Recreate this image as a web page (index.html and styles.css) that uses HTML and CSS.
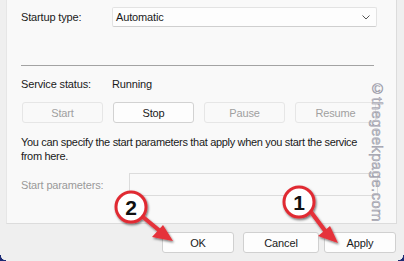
FILE: index.html
```html
<!DOCTYPE html>
<html>
<head>
<meta charset="utf-8">
<link rel="stylesheet" href="styles.css">
</head>
<body>
<div class="page">
  <div class="panel">
    <div class="row startup">
      <span class="label">Startup type:</span>
      <div class="combo">
        <span>Automatic</span>
        <svg class="chev" width="8" height="5" viewBox="0 0 8 5"><path d="M0.5 0.5 L4 4 L7.5 0.5" fill="none" stroke="#555" stroke-width="1"/></svg>
      </div>
    </div>
    <div class="sep"></div>
    <div class="row status">
      <span class="label">Service status:</span>
      <span>Running</span>
    </div>
    <div class="btnrow">
      <div class="btn disabled">Start</div>
      <div class="btn">Stop</div>
      <div class="btn disabled">Pause</div>
      <div class="btn disabled">Resume</div>
    </div>
    <p class="desc">You can specify the start parameters that apply when you start the service from here.</p>
    <div class="row params">
      <span class="label wide muted">Start parameters:</span>
      <div class="input"></div>
    </div>
  </div>
  <div class="footer">
    <div class="fbtn ok">OK</div>
    <div class="fbtn cancel">Cancel</div>
    <div class="fbtn apply">Apply</div>
  </div>
  <div class="corner-l"></div>
  <div class="corner-r"></div>
  <div class="watermark">©thegeekpage.com</div>
  <svg class="annot" width="404" height="261" viewBox="0 0 404 261">
    <defs>
      <filter id="sh" x="-30%" y="-30%" width="160%" height="160%">
        <feDropShadow dx="1" dy="1.5" stdDeviation="1.2" flood-color="#000" flood-opacity="0.55"/>
      </filter>
    </defs>
    <g filter="url(#sh)">
      <line x1="143" y1="217" x2="160" y2="231" stroke="#e5323a" stroke-width="4" stroke-linecap="round"/>
      <polygon points="173,241 152,237 163,225" fill="#e5323a"/>
      <line x1="311" y1="212" x2="326" y2="232" stroke="#e5323a" stroke-width="4" stroke-linecap="round"/>
      <polygon points="338,243 318,236 330,226" fill="#e5323a"/>
      <circle cx="131" cy="207" r="15" fill="#fff" stroke="#e02b33" stroke-width="3"/>
      <circle cx="299" cy="202" r="15" fill="#fff" stroke="#e02b33" stroke-width="3"/>
    </g>
    <text x="131" y="214.5" class="num" text-anchor="middle">2</text>
    <text x="299" y="209.5" class="num" text-anchor="middle">1</text>
  </svg>
</div>
</body>
</html>
```
FILE: styles.css
```css
* { box-sizing: border-box; }
html, body { margin: 0; padding: 0; }
body {
  background: #efefef;
  font-family: "Liberation Sans", Arial, sans-serif;
  font-size: 11px;
  letter-spacing: -0.15px;
  color: #1a1a1a;
}
.page {
  position: relative;
  width: 404px;
  height: 261px;
  overflow: hidden;
  display: flex;
  flex-direction: column;
}
.panel {
  margin-left: 6px;
  width: 391px;
  height: 224px;
  background: #f9f9f9;
  border-left: 1px solid #e6e6e6;
  border-right: 1px solid #dcdcdc;
  border-bottom: 1px solid #dcdcdc;
  padding-left: 14px;
  display: flex;
  flex-direction: column;
}
.row { display: flex; align-items: center; }
.label { width: 91px; flex: none; }
.label.wide { width: 108px; }
.muted { color: #9a9a9a; }
.startup { margin-top: 7px; height: 20px; }
.combo {
  width: 265px;
  height: 20px;
  background: #fdfdfd;
  border: 1px solid #e3e3e3;
  border-bottom-color: #cfcfcf;
  border-radius: 2px;
  display: flex;
  align-items: center;
  justify-content: space-between;
  padding: 0 5px 0 3px;
}
.chev { display: block; margin-right: 1px; }
.sep {
  margin-top: 38px;
  width: 353px;
  height: 1px;
  background: #a3a3a3;
}
.status { margin-top: 11px; height: 14px; }
.btnrow {
  margin-top: 11px;
  display: flex;
  gap: 10px;
  padding-left: 1px;
}
.btn {
  width: 81px;
  height: 21px;
  border: 1px solid #d2d2d2;
  border-radius: 3px;
  background: #fdfdfd;
  display: flex;
  align-items: center;
  justify-content: center;
}
.btn.disabled {
  background: #f9f9f9;
  border-color: #e6e6e6;
  color: #a0a0a0;
}
.desc {
  margin: 12px 0 0 0;
  line-height: 14px;
  width: 352px;
  letter-spacing: -0.32px;
}
.params { margin-top: 10px; height: 23px; }
.input {
  width: 249px;
  height: 23px;
  border: 1px solid #dcdcdc;
  background: #f9f9f9;
}
.footer {
  display: flex;
  padding-top: 8px;
  padding-left: 162px;
}
.fbtn {
  height: 21px;
  border: 1px solid #d0d0d0;
  border-radius: 3px;
  background: #fdfdfd;
  display: flex;
  align-items: center;
  justify-content: center;
}
.ok { width: 72px; }
.cancel { width: 76px; margin-left: 9px; }
.apply { width: 72px; margin-left: 5px; }
.corner-l {
  position: absolute;
  left: 0; bottom: 0;
  width: 6px; height: 6px;
  background: radial-gradient(circle at 100% 0, transparent 5px, #1c2a74 5.5px);
}
.corner-r {
  position: absolute;
  right: 0; bottom: 0;
  width: 6px; height: 6px;
  background: radial-gradient(circle at 0 0, transparent 5px, #1c2a74 5.5px);
}
.watermark {
  position: absolute;
  left: 369px;
  top: 80px;
  writing-mode: vertical-rl;
  font-family: "Liberation Sans", Arial, sans-serif;
  font-size: 15px;
  letter-spacing: 0.35px;
  color: #c4c4cc;
  -webkit-text-stroke: 0.4px #8e8e9c;
}
.annot {
  position: absolute;
  left: 0; top: 0;
}
.num {
  font-family: "Liberation Sans", Arial, sans-serif;
  font-weight: bold;
  font-size: 21px;
  fill: #111;
}
```
